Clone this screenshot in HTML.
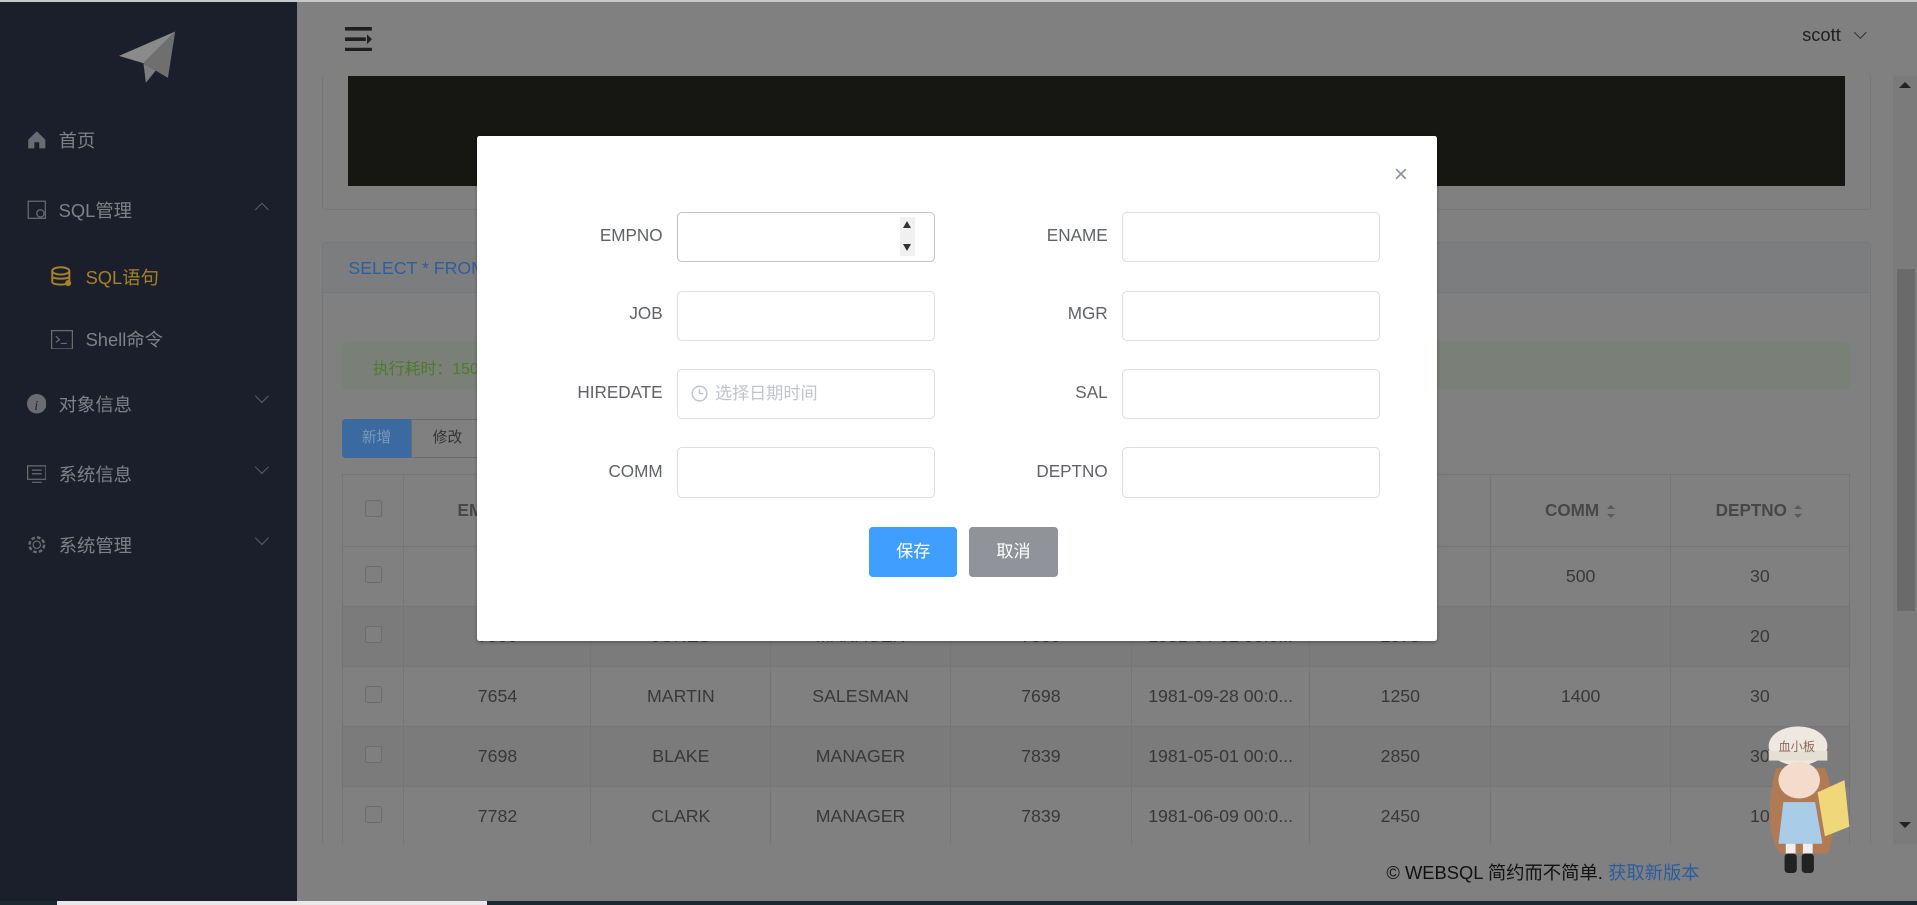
<!DOCTYPE html>
<html><head><meta charset="utf-8">
<style>
*{box-sizing:border-box;margin:0;padding:0}
html,body{width:1917px;height:905px;overflow:hidden;background:#808080}
#w{position:absolute;left:0;top:0;width:1568px;height:740px;zoom:1.22258;font-family:"Liberation Sans","Noto Sans CJK SC",sans-serif;background:#808080;overflow:hidden}
.a{position:absolute}
.side{left:0;top:0;width:243px;height:740px;background:#1b1f2b}
.mi{position:absolute;left:22px;font-size:15px;color:#7f8188;display:flex;align-items:center}
.mi svg{margin-right:10px}
.chev{position:absolute;left:210px;width:8px;height:8px;border-right:1px solid #5d6068;border-bottom:1px solid #5d6068}
table{border-collapse:collapse;position:absolute;left:280px;top:388px;width:1233px;font-size:14.5px;color:#383838;text-align:center}
td,th{border:1px solid #767676;height:49px}
th{height:59px;color:#474747;font-weight:bold;font-size:14px}
tr.d td{background:#7b7b7b}
.cb{display:inline-block;width:14px;height:14px;border:1px solid #6c6c6c;border-radius:2px;background:#7f7f7f}
.srt{display:inline-block;vertical-align:middle;margin-left:6px;width:8px;height:10px;position:relative}
.srt:before,.srt:after{content:"";position:absolute;left:0;border-left:4px solid transparent;border-right:4px solid transparent}
.srt:before{top:0;border-bottom:4px solid #5a5a5a}
.srt:after{bottom:0;border-top:4px solid #5a5a5a}
.modal{left:390px;top:111px;width:785px;height:413px;background:#fff;border-radius:2px;box-shadow:0 1px 3px rgba(0,0,0,.3)}
.lb{position:absolute;font-size:14px;color:#606266;text-align:right;width:120px}
.in{position:absolute;width:211px;height:41px;border:1px solid #dcdfe6;border-radius:4px;background:#fff}
</style></head><body><div id="w">
<div class="a" style="left:0;top:0;width:1568px;height:2px;background:#c8c8c8;z-index:5"></div>
<div class="a side">
 <svg class="a" style="left:97px;top:24px" width="48" height="46" viewBox="0 0 48 46"><polygon points="0,22 46,2 20,28" fill="#8a8a8a"/><polygon points="46,2 40,40 20,28" fill="#6f6f6f"/><polygon points="20,28 22,44 30,34" fill="#7d7d7d"/></svg>
 <div class="mi" style="top:104px"><svg width="16" height="16" viewBox="0 0 16 16"><path d="M1 8 L8 1 L15 8 V15 H10 V10 H6 V15 H1Z" fill="#6a6c72"/></svg>首页</div>
 <div class="mi" style="top:161px"><svg width="16" height="16" viewBox="0 0 16 16"><rect x="1" y="1" width="14" height="14" fill="none" stroke="#6a6c72"/><circle cx="11" cy="11" r="3" fill="none" stroke="#6a6c72"/></svg>SQL管理</div>
 <div class="chev" style="top:168px;transform:rotate(-135deg)"></div>
 <div class="mi" style="left:42px;top:216px;color:#a3822a"><svg width="18" height="18" viewBox="0 0 18 18"><ellipse cx="8" cy="4" rx="7" ry="3" fill="none" stroke="#a3822a" stroke-width="1.6"/><path d="M1 4 V13 C1 16 15 16 15 13 V4 M1 8.5 C1 11 15 11 15 8.5" fill="none" stroke="#a3822a" stroke-width="1.6"/><circle cx="14" cy="14" r="2.5" fill="#a3822a"/></svg>SQL语句</div>
 <div class="mi" style="left:42px;top:267px"><svg width="18" height="16" viewBox="0 0 18 16"><rect x=".5" y=".5" width="17" height="15" fill="none" stroke="#6a6c72"/><path d="M4 5 L7 8 L4 10 M8 11 H13" stroke="#6a6c72" fill="none"/></svg>Shell命令</div>
 <div class="mi" style="top:320px"><svg width="16" height="16" viewBox="0 0 16 16"><circle cx="8" cy="8" r="8" fill="#6a6c72"/><text x="6" y="13" font-size="11" font-style="italic" fill="#1b1f2b" font-family="Liberation Serif">i</text></svg>对象信息</div>
 <div class="chev" style="top:320px;transform:rotate(45deg)"></div>
 <div class="mi" style="top:377px"><svg width="16" height="16" viewBox="0 0 16 16"><rect x=".5" y="1.5" width="15" height="11" fill="none" stroke="#6a6c72"/><path d="M4 5H12M4 8H12M4 15H12" stroke="#6a6c72"/></svg>系统信息</div>
 <div class="chev" style="top:378px;transform:rotate(45deg)"></div>
 <div class="mi" style="top:435px"><svg width="16" height="16" viewBox="0 0 16 16"><circle cx="8" cy="8" r="6" fill="none" stroke="#6a6c72" stroke-width="2" stroke-dasharray="3 1.7"/><circle cx="8" cy="8" r="3" fill="none" stroke="#6a6c72"/></svg>系统管理</div>
 <div class="chev" style="top:436px;transform:rotate(45deg)"></div>
</div>
<svg class="a" style="left:282px;top:22px" width="24" height="20" viewBox="0 0 24 20"><path d="M0 1.5H22M0 10H17M0 18.5H22" stroke="#1f1f1f" stroke-width="3"/><polygon points="18,6 22,10 18,14" fill="#1f1f1f"/></svg>
<div class="a" style="left:1474px;top:20px;font-size:15px;color:#1f1f1f">scott</div>
<div class="a" style="left:1518px;top:23px;width:7px;height:7px;border-right:1px solid #333;border-bottom:1px solid #333;transform:rotate(45deg)"></div>
<div class="a" style="left:263px;top:60px;width:1267px;height:112px;border:1px solid #777;border-top:none;border-radius:3px"></div>
<div class="a" style="left:285px;top:62px;width:1224px;height:90px;background:#161612"></div>
<div class="a" style="left:1548px;top:62px;width:20px;height:628px;background:#7b7b7b"></div>
<div class="a" style="left:1552px;top:220px;width:14px;height:280px;background:#6a6a6a"></div>
<div class="a" style="left:1553px;top:67px;border:5px solid transparent;border-bottom-color:#222;border-top:none"></div>
<div class="a" style="left:1553px;top:672px;border:5px solid transparent;border-top-color:#222;border-bottom:none"></div>
<div class="a" style="left:263px;top:198px;width:1267px;height:500px;border:1px solid #777;border-radius:3px"></div>
<div class="a" style="left:264px;top:199px;width:1265px;height:41px;background:#7c7d7f;border-bottom:1px solid #777"></div>
<div class="a" style="left:285px;top:211px;font-size:14.5px;color:#2f5e9c">SELECT * FROM</div>
<div class="a" style="left:280px;top:280px;width:1233px;height:38px;background:#7a8078;border-radius:4px"></div>
<div class="a" style="left:305px;top:291px;font-size:13px;color:#4d7a2b">执行耗时：150</div>
<div class="a" style="left:280px;top:343px;width:56px;height:32px;background:#3a6aa0;border-radius:3px 0 0 3px;color:#7c98bb;font-size:12px;text-align:center;line-height:32px">新增</div>
<div class="a" style="left:336px;top:343px;width:60px;height:32px;border:1px solid #6c6c6c;color:#333;font-size:12px;text-align:center;line-height:30px">修改</div>
<table>
<tr><th style="width:50px"><span class="cb"></span></th><th style="width:153px">EMPNO<span class="srt"></span></th><th style="width:147px">ENAME<span class="srt"></span></th><th style="width:147px">JOB<span class="srt"></span></th><th style="width:148px">MGR<span class="srt"></span></th><th style="width:146px">HIREDATE<span class="srt"></span></th><th style="width:148px">SAL<span class="srt"></span></th><th style="width:147px">COMM<span class="srt"></span></th><th>DEPTNO<span class="srt"></span></th></tr>
<tr><td><span class="cb"></span></td><td>7521</td><td>WARD</td><td>SALESMAN</td><td>7698</td><td>1981-02-22 00:0...</td><td>1250</td><td>500</td><td>30</td></tr>
<tr class="d"><td><span class="cb"></span></td><td>7566</td><td>JONES</td><td>MANAGER</td><td>7839</td><td>1981-04-02 00:0...</td><td>2975</td><td></td><td>20</td></tr>
<tr><td><span class="cb"></span></td><td>7654</td><td>MARTIN</td><td>SALESMAN</td><td>7698</td><td>1981-09-28 00:0...</td><td>1250</td><td>1400</td><td>30</td></tr>
<tr class="d"><td><span class="cb"></span></td><td>7698</td><td>BLAKE</td><td>MANAGER</td><td>7839</td><td>1981-05-01 00:0...</td><td>2850</td><td></td><td>30</td></tr>
<tr><td><span class="cb"></span></td><td>7782</td><td>CLARK</td><td>MANAGER</td><td>7839</td><td>1981-06-09 00:0...</td><td>2450</td><td></td><td>10</td></tr>
</table>
<div class="a" style="left:243px;top:690px;width:1325px;height:50px;background:#808080"></div>
<div class="a" style="left:1134px;top:703px;font-size:15px;color:#111">© WEBSQL 简约而不简单. <span style="color:#2a5da0">获取新版本</span></div>
<div class="a" style="left:0;top:737px;width:1568px;height:3px;background:#1b2a30"></div>
<div class="a" style="left:47px;top:737px;width:351px;height:3px;background:#e8e8e8"></div>
<svg class="a" style="left:1435px;top:588px" width="80" height="135" viewBox="0 0 80 135">
<path d="M18 40 C10 70 12 100 22 110 L60 110 C68 95 66 60 58 40Z" fill="#b07a55"/>
<ellipse cx="36" cy="22" rx="24" ry="16" fill="#eee8e0"/><rect x="12" y="26" width="48" height="8" fill="#e6dfd4"/>
<text x="20" y="26" font-size="10" fill="#8a6a5a">血小板</text>
<ellipse cx="37" cy="50" rx="17" ry="15" fill="#f4dccc"/>
<path d="M24 68 L50 68 L56 102 L20 102Z" fill="#a9cde9"/>
<polygon points="52,60 74,50 78,88 58,96" fill="#f0d77a"/>
<rect x="26" y="102" width="8" height="8" fill="#eee"/><rect x="40" y="102" width="8" height="8" fill="#eee"/>
<rect x="25" y="110" width="10" height="16" rx="3" fill="#222"/><rect x="39" y="110" width="10" height="16" rx="3" fill="#222"/>
</svg>
<div class="a modal">
 <div class="a" style="left:750px;top:22px;font-size:20px;color:#909399;line-height:1">×</div>
 <div class="lb" style="left:32px;top:74px">EMPNO</div>
 <div class="in" style="left:164px;top:62px;border-color:#c0c4cc"><div class="a" style="right:16px;top:4px;width:12px;height:32px;background:#f0f0f0"></div><div class="a" style="right:19px;top:7px;border:4px solid transparent;border-bottom:6px solid #333;border-top:none"></div><div class="a" style="right:19px;top:26px;border:4px solid transparent;border-top:6px solid #333;border-bottom:none"></div></div>
 <div class="lb" style="left:396px;top:74px">ENAME</div>
 <div class="in" style="left:528px;top:62px"></div>
 <div class="lb" style="left:32px;top:138px">JOB</div>
 <div class="in" style="left:164px;top:127px"></div>
 <div class="lb" style="left:396px;top:138px">MGR</div>
 <div class="in" style="left:528px;top:127px"></div>
 <div class="lb" style="left:32px;top:202px">HIREDATE</div>
 <div class="in" style="left:164px;top:191px;color:#c0c4cc;font-size:14px;line-height:39px;padding-left:10px"><svg width="14" height="14" viewBox="0 0 14 14" style="vertical-align:-2px;margin-right:6px"><circle cx="7" cy="7" r="6" fill="none" stroke="#c0c4cc" stroke-width="1.2"/><path d="M7 3.5V7H10" fill="none" stroke="#c0c4cc" stroke-width="1.2"/></svg>选择日期时间</div>
 <div class="lb" style="left:396px;top:202px">SAL</div>
 <div class="in" style="left:528px;top:191px"></div>
 <div class="lb" style="left:32px;top:267px">COMM</div>
 <div class="in" style="left:164px;top:255px"></div>
 <div class="lb" style="left:396px;top:267px">DEPTNO</div>
 <div class="in" style="left:528px;top:255px"></div>
 <div class="a" style="left:321px;top:320px;width:72px;height:41px;background:#409eff;border-radius:3px;color:#fff;font-size:14px;text-align:center;line-height:41px">保存</div>
 <div class="a" style="left:403px;top:320px;width:72px;height:41px;background:#909399;border-radius:3px;color:#fff;font-size:14px;text-align:center;line-height:41px">取消</div>
</div>
</div></body></html>
